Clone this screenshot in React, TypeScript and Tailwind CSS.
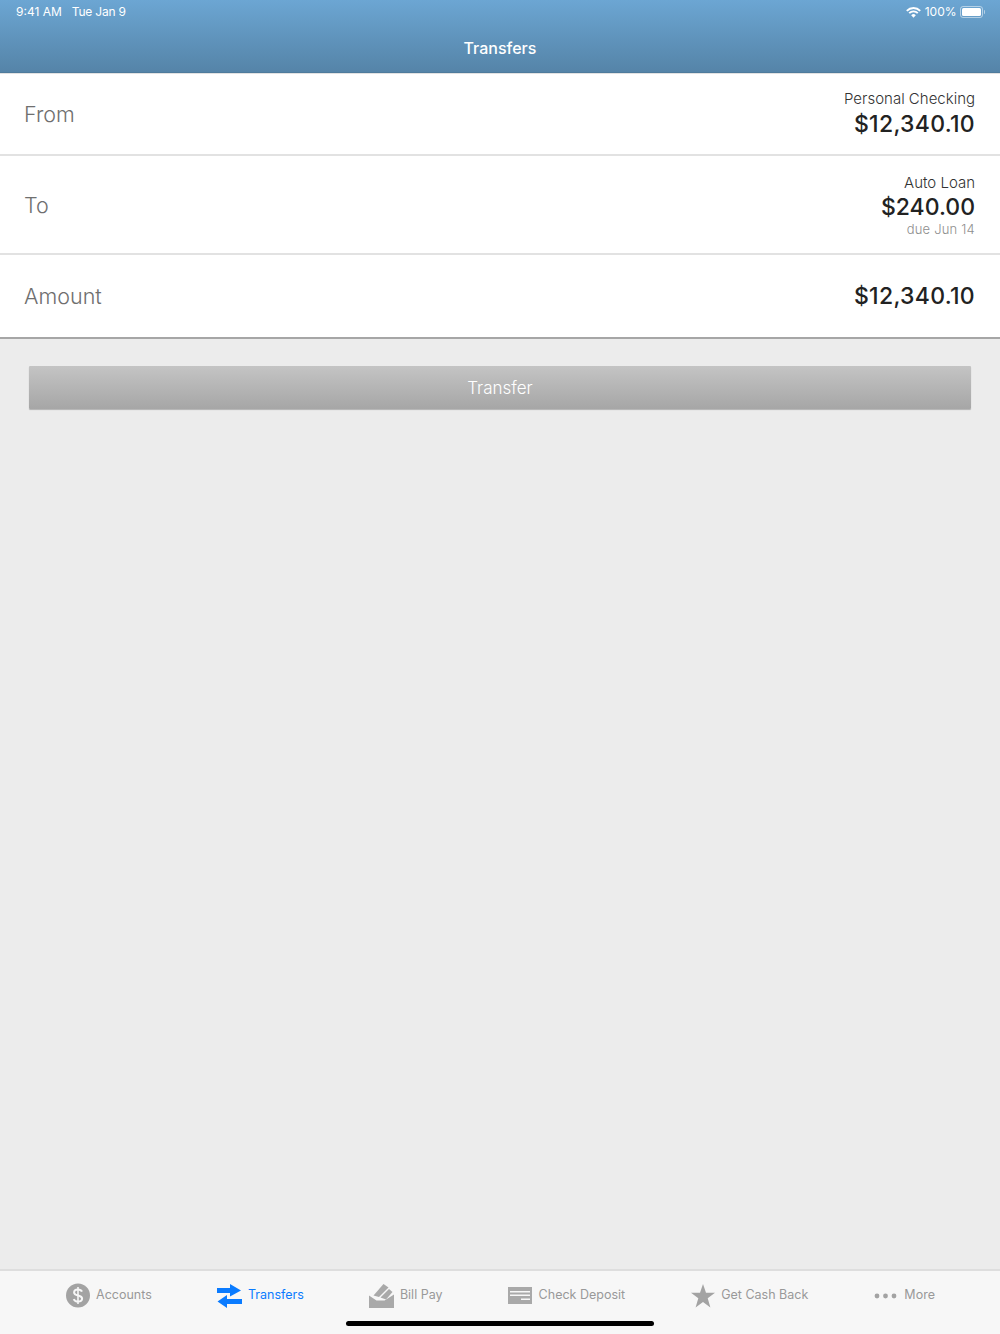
import type { ReactNode } from 'react'

function Wifi() {
  return (
    <svg width="15" height="11" viewBox="0 0 15 11" fill="none" stroke="white" strokeLinecap="butt">
      <path d="M.8 3.800 A9.400 9.400 0 0 1 14.200 3.800" strokeWidth="1.900" />
      <path d="M3.200 6.200 A6 6 0 0 1 11.800 6.200" strokeWidth="1.900" />
      <path d="M7.500 10.800 L5.200 8.300 A3.200 3.200 0 0 1 9.800 8.300 Z" fill="white" stroke="none" />
    </svg>
  )
}

function Battery() {
  return (
    <div className="flex items-center">
      <div className="w-[23px] h-[12px] rounded-[3px] border border-white/50 p-[1px]">
        <div className="w-full h-full rounded-[1.5px] bg-white" />
      </div>
      <div className="w-[1.5px] h-[4px] ml-[1px] rounded-r-sm bg-white/50" />
    </div>
  )
}

function Row({ label, height, children }: { label: string; height: string; children: ReactNode }) {
  return (
    <div className={`flex items-center justify-between pl-[24px] pr-[25px] bg-white ${height}`}>
      <div className="text-[21.5px] leading-[28px] font-light text-[#6f6f6f]">{label}</div>
      <div className="flex flex-col items-end">{children}</div>
    </div>
  )
}

function DollarIcon() {
  return (
    <svg width="24" height="25" viewBox="0 0 24 25">
      <circle cx="12" cy="12.500" r="12" fill="#a3a3a3" />
      <path d="M16 8.600c-.7-1.500-2.200-2.200-4-2.200-2.200 0-3.900 1.100-3.900 3 0 4 8 2.200 8 6.100 0 2-1.800 3.100-4.100 3.100-2 0-3.600-.9-4.300-2.500" fill="none" stroke="#f7f7f7" strokeWidth="2" />
      <path d="M12 4v17" stroke="#f7f7f7" strokeWidth="1.600" />
    </svg>
  )
}

function TransferIcon() {
  return (
    <svg width="25" height="24" viewBox="0 0 25 24" fill="#0a7bff">
      <path d="M0 4h13V0l11 6.500-11 6V9H0z" />
      <path d="M25 15H10v-4L.5 17.500 10 24v-4h15z" />
    </svg>
  )
}

function BillPayIcon() {
  return (
    <svg width="25" height="24" viewBox="0 0 25 24" fill="#a9a9a9">
      <path d="M4.500 11.500 14.500 0l5 3.500-9.500 9.500z" />
      <path d="M11.500 13.500 20 5l3.500 3-6.500 7.500z" />
      <path d="M0 11.500 7.500 16.500h8l9.500-6V24H0z" />
    </svg>
  )
}

function CheckIcon() {
  return (
    <svg width="24" height="17" viewBox="0 0 24 17">
      <rect width="24" height="17" fill="#a9a9a9" />
      <rect x="2" y="4" width="20" height="1.500" fill="#f7f7f7" />
      <rect x="2" y="7.500" width="20" height="1.500" fill="#f7f7f7" />
      <rect x="13" y="11.500" width="9" height="1.500" fill="#f7f7f7" />
    </svg>
  )
}

function StarIcon() {
  return (
    <svg width="24" height="24" viewBox="0 0 24 24" fill="#a3a3a3">
      <path d="M12 0l3 8.800h9l-7.300 5.500 2.700 9.200L12 18l-7.400 5.500 2.700-9.200L0 8.800h9z" />
    </svg>
  )
}

function DotsIcon() {
  return (
    <svg width="23" height="6" viewBox="0 0 23 6" fill="#a3a3a3">
      <circle cx="3" cy="3" r="2.400" />
      <circle cx="11.500" cy="3" r="2.400" />
      <circle cx="20" cy="3" r="2.400" />
    </svg>
  )
}

function Tab({ icon, label, active }: { icon: ReactNode; label: string; active?: boolean }) {
  return (
    <div className="flex items-center gap-[6px]">
      <div className="flex items-center justify-center w-[25px] h-[25px]">{icon}</div>
      <span className={active ? 'text-[12.5px] text-[#0a7bff]' : 'text-[12.5px] text-[#999999]'}>{label}</span>
    </div>
  )
}

export default function App() {
  return (
    <div className="relative flex flex-col h-[1334px] bg-[#ececec] overflow-hidden" style={{ fontFamily: 'Inter, "Noto Sans", sans-serif' }}>
      <header className="h-[73px] shrink-0 flex flex-col border-b border-[#4f7b9c] bg-gradient-to-b from-[#6ca6d3] to-[#5584a8] text-white">
        <div className="flex items-center justify-between h-[24px] pl-[16px] pr-[15px] text-[12px]">
          <div className="flex gap-[10px]">
            <span>9:41 AM</span>
            <span className="tracking-[-0.2px]">Tue Jan 9</span>
          </div>
          <div className="flex items-center gap-[4px]">
            <Wifi />
            <span className="mr-[-1px]">100%</span>
            <Battery />
          </div>
        </div>
        <div className="text-center text-[16px] leading-[24px] font-medium mt-[12px]">Transfers</div>
      </header>

      <div className="h-[1px] shrink-0 bg-[#e2e2e2]" />

      <section className="shrink-0">
        <Row label="From" height="h-[80px]">
          <div className="text-[15px] leading-[20px] font-light text-[#333333]">Personal Checking</div>
          <div className="text-[23px] leading-[30px] font-[450] text-[#222222] tracking-[0.3px]">$12,340.10</div>
        </Row>
        <div className="h-[2px] bg-[#e2e2e2]" />
        <Row label="To" height="h-[97px]">
          <div className="text-[15px] leading-[20px] font-light text-[#333333]">Auto Loan</div>
          <div className="text-[23px] leading-[28px] font-[450] text-[#222222]">$240.00</div>
          <div className="text-[13px] leading-[16px] font-light text-[#8e8e8e] tracking-[0.2px]">due Jun 14</div>
        </Row>
        <div className="h-[2px] bg-[#e2e2e2]" />
        <Row label="Amount" height="h-[82px]">
          <div className="text-[23px] leading-[30px] font-[450] text-[#222222] tracking-[0.3px]">$12,340.10</div>
        </Row>
        <div className="h-[2px] bg-[#a6a6a6]" />
      </section>

      <main className="flex-1 px-[29px] pt-[27px]">
        <button type="button" className="w-full h-[43px] pt-[2px] flex items-center justify-center rounded-[1px] bg-gradient-to-b from-[#c4c4c4] to-[#a6a6a6] shadow-[0_1px_1px_rgba(0,0,0,0.25)] text-[17px] font-light text-white">
          Transfer
        </button>
      </main>

      <nav className="h-[65px] shrink-0 border-t-2 border-[#dedede] bg-[#f7f7f7] pb-[14px] flex items-center justify-evenly">
        <Tab icon={<DollarIcon />} label="Accounts" />
        <Tab icon={<TransferIcon />} label="Transfers" active />
        <Tab icon={<BillPayIcon />} label="Bill Pay" />
        <Tab icon={<CheckIcon />} label="Check Deposit" />
        <Tab icon={<StarIcon />} label="Get Cash Back" />
        <Tab icon={<DotsIcon />} label="More" />
      </nav>

      <div className="absolute left-[346px] bottom-[8px] w-[308px] h-[5px] rounded-full bg-black" />
    </div>
  )
}
